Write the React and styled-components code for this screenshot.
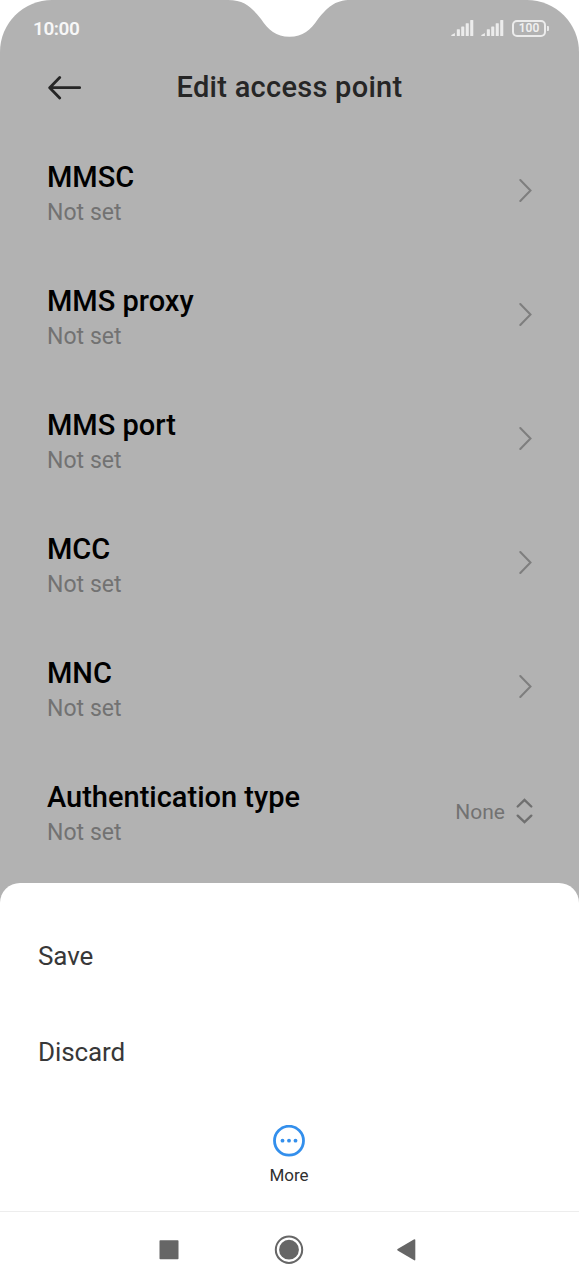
import React from 'react'
import styled, { createGlobalStyle } from 'styled-components'

const settings = [
	{ title: 'MMSC', value: 'Not set' },
	{ title: 'MMS proxy', value: 'Not set' },
	{ title: 'MMS port', value: 'Not set' },
	{ title: 'MCC', value: 'Not set' },
	{ title: 'MNC', value: 'Not set' },
	{ title: 'Authentication type', value: 'Not set', option: 'None' },
]

const Signal = () => (
	<svg width='23' height='17' viewBox='0 0 23 17' fill='#ececec'>
		<path d='M0.300 15.900V14.900L3.900 13V15.900Z' />
		<rect x='5.800' y='9.200' width='3.100' height='6.800' rx='0.600' />
		<rect x='10.200' y='6.400' width='3.100' height='9.600' rx='0.600' />
		<rect x='14.700' y='3.200' width='3.100' height='12.800' rx='0.600' />
		<rect x='19.200' y='0' width='3.100' height='16' rx='0.600' />
	</svg>
)

const StatusBar = () => (
	<StatusStyles>
		<Notch width='124' height='38' viewBox='0 0 124 38'>
			<path
				d='M0 0C17 0 24 8 33 19C40.500 30 48 36.700 61.500 36.700C75 36.700 82.500 30 90 19C99 8 106 0 123 0Z'
				fill='#fff'
			/>
		</Notch>
		<span className='time'>10:00</span>
		<div className='icons'>
			<Signal />
			<Signal />
			<Battery>100</Battery>
		</div>
	</StatusStyles>
)

const Row = ({ title, value, option }) => (
	<RowStyles>
		<RowText>
			<RowTitle>{title}</RowTitle>
			<RowValue>{value}</RowValue>
		</RowText>
		{option ? (
			<Option>
				{option}
				<svg width='18' height='26' viewBox='0 0 18 26'>
					<path d='M2.700 8.500L9.500 2L16.300 8.500M2.700 17.700L9.500 24.200L16.300 17.700' />
				</svg>
			</Option>
		) : (
			<Chevron width='14' height='24' viewBox='0 0 14 24'>
				<path d='M1.300 2L11.500 12.500L1.300 23' />
			</Chevron>
		)}
	</RowStyles>
)

const App = () => (
	<>
		<GlobalStyle />
		<Screen>
			<StatusBar />
			<Header>
				<svg width='34' height='24' viewBox='0 0 34 24'>
					<path d='M12.700 1.500L2.700 11.700L12.700 21.900M3.200 11.700H32.700' />
				</svg>
				<h1>Edit access point</h1>
			</Header>
			<main>
				{settings.map((item) => (
					<Row key={item.title} {...item} />
				))}
			</main>
			<Sheet>
				<SheetItem>Save</SheetItem>
				<SheetItem>Discard</SheetItem>
				<More>
					<svg width='32' height='32' viewBox='0 0 32 32'>
						<circle cx='16' cy='15.700' r='14.500' fill='none' stroke='#338fec' strokeWidth='2.800' />
						<g fill='#338fec'>
							<circle cx='9.500' cy='15.700' r='1.900' />
							<circle cx='16' cy='15.700' r='1.900' />
							<circle cx='22.500' cy='15.700' r='1.900' />
						</g>
					</svg>
					<span>More</span>
				</More>
			</Sheet>
			<NavBar>
				<svg width='30' height='30' viewBox='0 0 30 30'>
					<rect x='5.500' y='5.200' width='19' height='19' rx='0.800' />
				</svg>
				<svg width='30' height='30' viewBox='0 0 30 30'>
					<circle cx='15' cy='14.700' r='13.200' fill='none' stroke='#666' strokeWidth='2' />
					<circle cx='15' cy='14.700' r='9.900' />
				</svg>
				<svg width='30' height='30' viewBox='0 0 30 30'>
					<path d='M3.600 14.100Q2.600 14.800 3.600 15.500L19.800 25.100Q21.300 25.900 21.300 24.500V5.100Q21.300 3.700 19.800 4.500Z' />
				</svg>
			</NavBar>
		</Screen>
	</>
)

export default App

const GlobalStyle = createGlobalStyle`
	* {
		box-sizing: border-box;
	}

	body {
		margin: 0;
		background: #fff;
		font-family: Roboto, 'Liberation Sans', sans-serif;
	}
`

const Screen = styled.div`
	display: flex;
	flex-direction: column;
	width: 579px;
	height: 1288px;
	overflow: hidden;
	background: #b2b2b2;
	border-radius: 52px 52px 0 0;
`

const StatusStyles = styled.div`
	position: relative;
	display: flex;
	flex-shrink: 0;
	justify-content: space-between;
	align-items: center;
	height: 56px;
	padding: 0 32px 0 33px;

	.time {
		padding-top: 1px;
		color: #f7f7f7;
		font-size: 19px;
		font-weight: 600;
		letter-spacing: -0.45px;
		line-height: 22px;
	}

	.icons {
		display: flex;
		align-items: center;
		gap: 7px;
		padding-top: 1px;
	}
`

const Notch = styled.svg`
	position: absolute;
	top: 0;
	left: 228px;
`

const Battery = styled.span`
	position: relative;
	width: 34px;
	height: 17px;
	margin: 0 1px 1px 1px;
	border: 2px solid #ececec;
	border-radius: 5px;
	color: #f0f0f0;
	font-size: 12px;
	font-weight: 600;
	line-height: 13px;
	text-align: center;

	&::after {
		content: '';
		position: absolute;
		top: 4px;
		right: -5px;
		width: 2px;
		height: 5px;
		border-radius: 0 1px 1px 0;
		background: #e8e8e8;
	}
`

const Header = styled.header`
	display: grid;
	flex-shrink: 0;
	grid-template-columns: 34px 1fr 34px;
	align-items: center;
	height: 72px;
	padding: 0 47px;

	svg {
		margin-bottom: 9px;
		fill: none;
		stroke: #262626;
		stroke-width: 2.8;
		stroke-linecap: round;
		stroke-linejoin: round;
	}

	h1 {
		margin: 0 0 10px;
		color: #262626;
		font-size: 29px;
		font-weight: 500;
		letter-spacing: 0.28px;
		line-height: 34px;
		text-align: center;
	}
`

const RowStyles = styled.div`
	display: flex;
	justify-content: space-between;
	align-items: center;
	height: 124px;
	padding: 0 46px 0 47px;
`

const RowText = styled.div`
	padding-top: 9px;
`

const RowTitle = styled.div`
	color: #000;
	font-size: 29px;
	font-weight: 500;
	line-height: 35px;
`

const RowValue = styled.div`
	color: #727272;
	font-size: 23px;
	letter-spacing: 0.05px;
	line-height: 35px;
`

const Chevron = styled.svg`
	fill: none;
	stroke: #7e7e7e;
	stroke-width: 2;
	stroke-linecap: round;
`

const Option = styled.div`
	display: flex;
	align-items: center;
	gap: 10px;
	padding-top: 4px;
	color: #727272;
	font-size: 21px;

	svg {
		margin-bottom: 3px;
		fill: none;
		stroke: #707070;
		stroke-width: 2.4;
		stroke-linecap: round;
	}
`

const Sheet = styled.section`
	flex-shrink: 0;
	height: 328px;
	margin-top: auto;
	padding-top: 25px;
	border-radius: 20px 20px 0 0;
	background: #fff;
`

const SheetItem = styled.div`
	display: flex;
	align-items: center;
	height: 96px;
	padding-left: 38px;
	color: #383838;
	font-size: 26px;
	letter-spacing: -0.1px;
`

const More = styled.div`
	display: flex;
	flex-direction: column;
	align-items: center;
	gap: 8px;
	padding: 25px 1px 0 0;
	color: #303030;
	font-size: 17px;
	line-height: 21px;
`

const NavBar = styled.nav`
	display: flex;
	flex-shrink: 0;
	justify-content: center;
	align-items: center;
	gap: 90px;
	height: 77px;
	padding-right: 1px;
	border-top: 1px solid #ededed;
	background: #fff;

	svg {
		fill: #666;
	}
`
